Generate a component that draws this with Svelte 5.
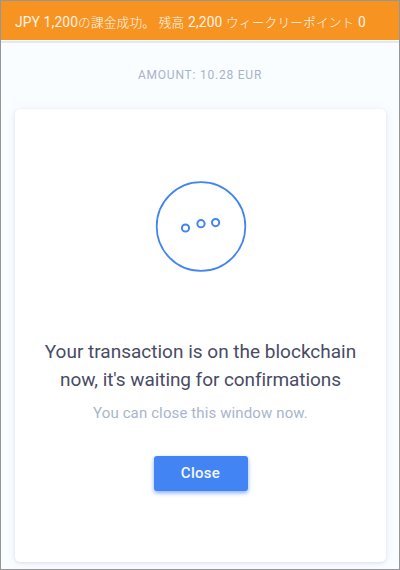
<script>
  const notice = [
    { text: "JPY 1,200" },
    { text: "の課金成功。", jp: true },
    { text: " " },
    { text: "残高", jp: true },
    { text: " 2,200 " },
    { text: "ウィークリーポイント", jp: true },
    { text: " 0" }
  ];
  const lines = ["Your transaction is on the blockchain", "now, it's waiting for confirmations"];
  const dots = [
    { x: 40.5, y: 58 },
    { x: 56, y: 53.7 },
    { x: 70.6, y: 52.6 }
  ];
</script>

<main>
  <header><span class="notice">{#each notice as part}<span class:jp={part.jp}>{part.text}</span>{/each}</span></header>
  <p class="amount"><span>AMOUNT: 10.28 EUR</span></p>
  <section class="card">
    <svg class="status" width="112" height="112" viewBox="0 0 112 112" fill="none" stroke="#4284f4" aria-hidden="true">
      <circle cx="56" cy="56.5" r="44.3" stroke-width="1.8" />
      {#each dots as dot}
        <circle cx={dot.x} cy={dot.y} r="3.6" stroke-width="2" />
      {/each}
    </svg>
    <h1>
      {#each lines as line, i}
        <span class="line line-{i}">{line}</span>
      {/each}
    </h1>
    <p class="hint"><span>You can close this window now.</span></p>
    <button type="button"><span>Close</span></button>
  </section>
</main>

<style>
  :global(body) {
    margin: 0;
  }
  main {
    box-sizing: border-box;
    width: 400px;
    height: 570px;
    display: flex;
    flex-direction: column;
    overflow: hidden;
    border: 1px solid #969696;
    background: #fafdff;
    font-family: Roboto, "Noto Sans CJK JP", sans-serif;
  }
  header {
    flex: none;
    height: 39px;
    display: flex;
    align-items: center;
    padding: 1px 0 0 14px;
    box-sizing: border-box;
    background: #f79321;
    color: #fff4e6;
    font-size: 13.8px;
    letter-spacing: 0.15px;
    white-space: nowrap;
    box-shadow: 0 1px 0 #fff, 0 3px 0 #e5e8f1;
  }
  .notice {
    white-space: pre;
  }
  .jp {
    font-size: 12.7px;
    font-weight: 300;
    color: #fffaf2;
  }
  p, h1 {
    margin: 0;
    text-align: center;
  }
  .amount {
    margin-top: 27px;
    height: 16px;
    line-height: 16px;
    font-size: 12px;
    letter-spacing: 0.78px;
    color: #a9b3c9;
  }
  .card {
    box-sizing: border-box;
    flex: none;
    width: 371px;
    height: 453px;
    margin: 26px 0 0 14px;
    padding-top: 61px;
    display: flex;
    flex-direction: column;
    align-items: center;
    border-radius: 5px;
    background: #fff;
    box-shadow: 0 1px 3px #dce0eb, 0 1px 10px 1px #edf2fc;
  }
  .status {
    flex: none;
  }
  h1 {
    margin-top: 56px;
    display: flex;
    flex-direction: column;
    align-items: center;
    font-size: 19px;
    font-weight: 400;
    line-height: 28px;
    color: #494b65;
    white-space: nowrap;
  }
  .line-1 {
    letter-spacing: -0.07px;
  }
  .hint {
    margin-top: 9px;
    line-height: 20px;
    font-size: 15px;
    letter-spacing: 0.12px;
    color: #a9b5cb;
  }
  button {
    width: 94px;
    height: 35px;
    margin-top: 33px;
    padding: 0;
    border: 0;
    border-radius: 3px;
    background: #4284f4;
    box-shadow: 0 2px 4px rgba(66, 132, 244, 0.65);
    color: #f5f9ff;
    font: 500 15px/35px Roboto, sans-serif;
    letter-spacing: 0.3px;
  }
</style>
